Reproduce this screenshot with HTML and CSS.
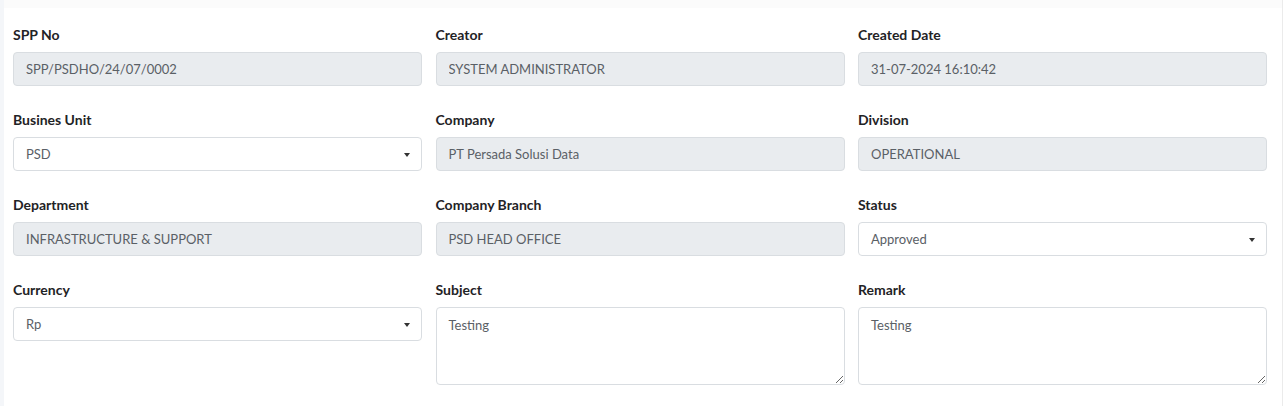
FILE: index.html
```html
<!DOCTYPE html>
<html lang="en">
<head>
    <meta charset="UTF-8">
    <meta name="viewport" content="width=device-width, initial-scale=1.0">
    <title>SPP Detail</title>
    <link rel="stylesheet" href="styles.css">
</head>
<body>
    <div class="card">
        <div class="card-top"></div>
        <form class="form-grid">
            <div class="form-group">
                <label>SPP No</label>
                <input type="text" class="form-control" value="SPP/PSDHO/24/07/0002" disabled>
            </div>
            <div class="form-group">
                <label>Creator</label>
                <input type="text" class="form-control" value="SYSTEM ADMINISTRATOR" disabled>
            </div>
            <div class="form-group">
                <label>Created Date</label>
                <input type="text" class="form-control" value="31-07-2024 16:10:42" disabled>
            </div>

            <div class="form-group">
                <label>Busines Unit</label>
                <div class="select-box">PSD<span class="caret"></span></div>
            </div>
            <div class="form-group">
                <label>Company</label>
                <input type="text" class="form-control" value="PT Persada Solusi Data" disabled>
            </div>
            <div class="form-group">
                <label>Division</label>
                <input type="text" class="form-control" value="OPERATIONAL" disabled>
            </div>

            <div class="form-group">
                <label>Department</label>
                <input type="text" class="form-control" value="INFRASTRUCTURE &amp; SUPPORT" disabled>
            </div>
            <div class="form-group">
                <label>Company Branch</label>
                <input type="text" class="form-control" value="PSD HEAD OFFICE" disabled>
            </div>
            <div class="form-group">
                <label>Status</label>
                <div class="select-box">Approved<span class="caret"></span></div>
            </div>

            <div class="form-group">
                <label>Currency</label>
                <div class="select-box">Rp<span class="caret"></span></div>
            </div>
            <div class="form-group">
                <label>Subject</label>
                <textarea class="form-control">Testing</textarea>
            </div>
            <div class="form-group">
                <label>Remark</label>
                <textarea class="form-control">Testing</textarea>
            </div>
        </form>
    </div>
</body>
</html>
```

FILE: styles.css
```css
:root {
    --page-bg: #f4f6f9;
    --text: #212529;
    --input-text: #5a6066;
    --border: #d9dde1;
    --disabled: #e9ecef;
}

* {
    box-sizing: border-box;
}

body {
    margin: 0;
    background-color: var(--page-bg);
    font-family: Lato, 'Source Sans Pro', 'Liberation Sans', sans-serif;
    font-size: 14px;
    color: var(--text);
}

.card {
    margin-left: 4px;
    min-height: 406px;
    background-color: #ffffff;
    border-right: 1px solid #ebebeb;
}

.card-top {
    height: 8px;
    background-color: #fbfbfb;
}

.form-grid {
    display: grid;
    grid-template-columns: repeat(3, 1fr);
    column-gap: 13.5px;
    padding: 16px 15px 0 9px;
}

.form-group {
    display: flex;
    flex-direction: column;
    margin-bottom: 23px;
}

label {
    font-weight: 700;
    line-height: 21px;
    margin-bottom: 7px;
    color: #1f2326;
}

.form-control,
.select-box {
    font-family: inherit;
    font-size: 13px;
    color: var(--input-text);
    height: 34px;
    padding: 0 12px;
    border: 1px solid var(--border);
    border-radius: 4px;
    background-color: #ffffff;
}

.form-control:disabled {
    background-color: var(--disabled);
    color: var(--input-text);
    opacity: 1;
}

textarea.form-control {
    height: 78px;
    padding-top: 8px;
    line-height: 18px;
    resize: vertical;
}

.select-box {
    position: relative;
    display: flex;
    align-items: center;
}

.caret {
    position: absolute;
    right: 11px;
    top: 15px;
    border-style: solid;
    border-width: 4px 3.5px 0 3.5px;
    border-color: #333 transparent transparent transparent;
}
```
